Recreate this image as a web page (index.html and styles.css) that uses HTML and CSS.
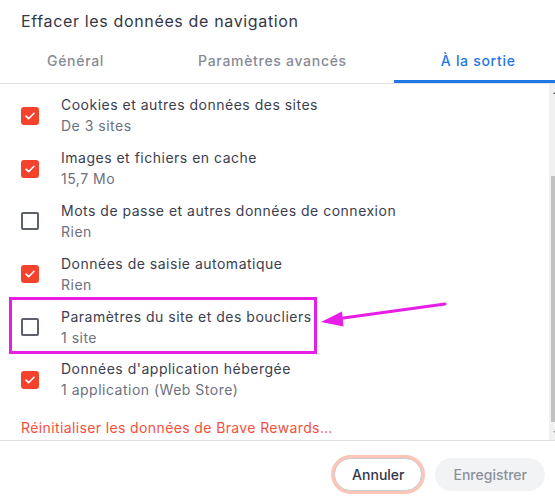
FILE: index.html
```html
<!DOCTYPE html>
<html lang="fr">
<head>
<meta charset="utf-8">
<title>Effacer les données de navigation</title>
<link rel="stylesheet" href="styles.css">
</head>
<body>
<div class="dialog">
  <h1 class="title">Effacer les données de navigation</h1>
  <div class="tabs">
    <div class="tab">Général</div>
    <div class="tab">Paramètres avancés</div>
    <div class="tab active">À la sortie</div>
  </div>
  <div class="body">
    <div class="list">
      <div class="row">
        <span class="cb checked"><svg viewBox="0 0 18 18"><path d="M5 9.2l2.6 2.5L13 6.3"/></svg></span>
        <div class="text"><div class="label">Cookies et autres données des sites</div><div class="sub">De 3 sites</div></div>
      </div>
      <div class="row">
        <span class="cb checked"><svg viewBox="0 0 18 18"><path d="M5 9.2l2.6 2.5L13 6.3"/></svg></span>
        <div class="text"><div class="label">Images et fichiers en cache</div><div class="sub">15,7 Mo</div></div>
      </div>
      <div class="row">
        <span class="cb"></span>
        <div class="text"><div class="label">Mots de passe et autres données de connexion</div><div class="sub">Rien</div></div>
      </div>
      <div class="row">
        <span class="cb checked"><svg viewBox="0 0 18 18"><path d="M5 9.2l2.6 2.5L13 6.3"/></svg></span>
        <div class="text"><div class="label">Données de saisie automatique</div><div class="sub">Rien</div></div>
      </div>
      <div class="row">
        <span class="cb"></span>
        <div class="text"><div class="label">Paramètres du site et des boucliers</div><div class="sub">1 site</div></div>
      </div>
      <div class="row">
        <span class="cb checked"><svg viewBox="0 0 18 18"><path d="M5 9.2l2.6 2.5L13 6.3"/></svg></span>
        <div class="text"><div class="label">Données d'application hébergée</div><div class="sub">1 application (Web Store)</div></div>
      </div>
      <div class="link">Réinitialiser les données de Brave Rewards…</div>
    </div>
    <div class="scrollbar">
      <div class="sb-btn"><span class="arrow-up"></span></div>
      <div class="sb-track"><div class="sb-thumb"></div></div>
      <div class="sb-btn"><span class="arrow-down"></span></div>
    </div>
  </div>
  <div class="footer">
    <button class="btn cancel">Annuler</button>
    <button class="btn save">Enregistrer</button>
  </div>
  <div class="highlight"></div>
  <svg class="pointer" width="555" height="500" viewBox="0 0 555 500">
    <line x1="445" y1="304" x2="336" y2="319" stroke="#e61ee6" stroke-width="3" stroke-linecap="round"/>
    <polygon points="321,322 342,311.5 343.5,326.5" fill="#e61ee6"/>
  </svg>
</div>
</body>
</html>
```

FILE: styles.css
```css
html, body {
  margin: 0;
  padding: 0;
  overflow: hidden;
  background: #ffffff;
}

body {
  font-family: Inter, "Noto Sans", "Liberation Sans", sans-serif;
  color: #3b3e4f;
}

.dialog {
  position: relative;
  width: 564px;
  height: 500px;
  display: flex;
  flex-direction: column;
}

.title {
  margin: 0;
  height: 40px;
  box-sizing: border-box;
  padding: 10px 0 0 21px;
  font-size: 16px;
  line-height: 22px;
  font-weight: 400;
  letter-spacing: 0.65px;
  color: #343746;
}

.tabs {
  display: flex;
  border-bottom: 1px solid #e2e2e6;
  height: 44px;
  box-sizing: border-box;
}

.tab {
  padding: 11px 47px 9px;
  font-size: 14px;
  line-height: 20px;
  font-weight: 500;
  letter-spacing: 0.7px;
  color: #868b95;
  border-bottom: 3px solid transparent;
  white-space: nowrap;
}

.tab.active {
  color: #2277e6;
  border-bottom-color: #2277e6;
}

.body {
  height: 356px;
  display: flex;
}

.list {
  flex: 1;
  padding-top: 6px;
}

.row {
  display: flex;
  align-items: center;
  height: 52.8px;
  box-sizing: border-box;
  padding: 5px 0 6px 21px;
}

.cb {
  width: 18px;
  height: 18px;
  box-sizing: border-box;
  border: 2px solid #5c6068;
  border-radius: 2px;
  margin-right: 22px;
  flex: none;
  display: flex;
}

.cb.checked {
  background: #f4432c;
  border-color: #f4432c;
  border-radius: 3px;
}

.cb svg {
  width: 18px;
  height: 18px;
  margin: -2px;
  fill: none;
  stroke: #ffffff;
  stroke-width: 1.6;
  stroke-linecap: round;
  stroke-linejoin: round;
}

.label {
  font-size: 14px;
  line-height: 21px;
  letter-spacing: 0.5px;
  color: #3b3e4f;
}

.sub {
  font-size: 14px;
  line-height: 22px;
  letter-spacing: 0.5px;
  color: #6d7180;
}

.link {
  margin: 11px 0 0 21px;
  font-size: 14px;
  line-height: 20px;
  letter-spacing: 0.38px;
  color: #f5503d;
}

.scrollbar {
  width: 15px;
  background: #f1f1f1;
  display: flex;
  flex-direction: column;
}

.sb-btn {
  height: 15px;
  display: flex;
  align-items: center;
  justify-content: center;
}

.arrow-up {
  width: 0;
  height: 0;
  border-left: 4px solid transparent;
  border-right: 4px solid transparent;
  border-bottom: 4px solid #505050;
}

.arrow-down {
  width: 0;
  height: 0;
  border-left: 4px solid transparent;
  border-right: 4px solid transparent;
  border-top: 4px solid #a3a3a3;
}

.sb-track {
  flex: 1;
}

.sb-thumb {
  margin: 77px 2px 0;
  height: 246px;
  background: #c1c1c1;
}

.footer {
  flex: 1;
  border-top: 1px solid #e2e2e6;
  display: flex;
  justify-content: flex-end;
  align-items: flex-start;
  gap: 13px;
  padding: 17px 19px 0 0;
}

.btn {
  font-family: inherit;
  font-size: 14px;
  font-weight: 500;
  height: 33px;
  border-radius: 17px;
  padding: 0 18px;
  line-height: 20px;
  cursor: pointer;
}

.cancel {
  background: #ffffff;
  border: 1px solid #c9cbd3;
  color: #343746;
  box-shadow: 0 0 0 3px #fcc5b6;
  padding: 0 17px;
}

.save {
  background: #f1f3f5;
  border: none;
  color: #8c919b;
}

.highlight {
  position: absolute;
  left: 9px;
  top: 297px;
  width: 308px;
  height: 57px;
  box-sizing: border-box;
  border: 3px solid #e61ee6;
}

.pointer {
  position: absolute;
  left: 0;
  top: 0;
  pointer-events: none;
}
```
